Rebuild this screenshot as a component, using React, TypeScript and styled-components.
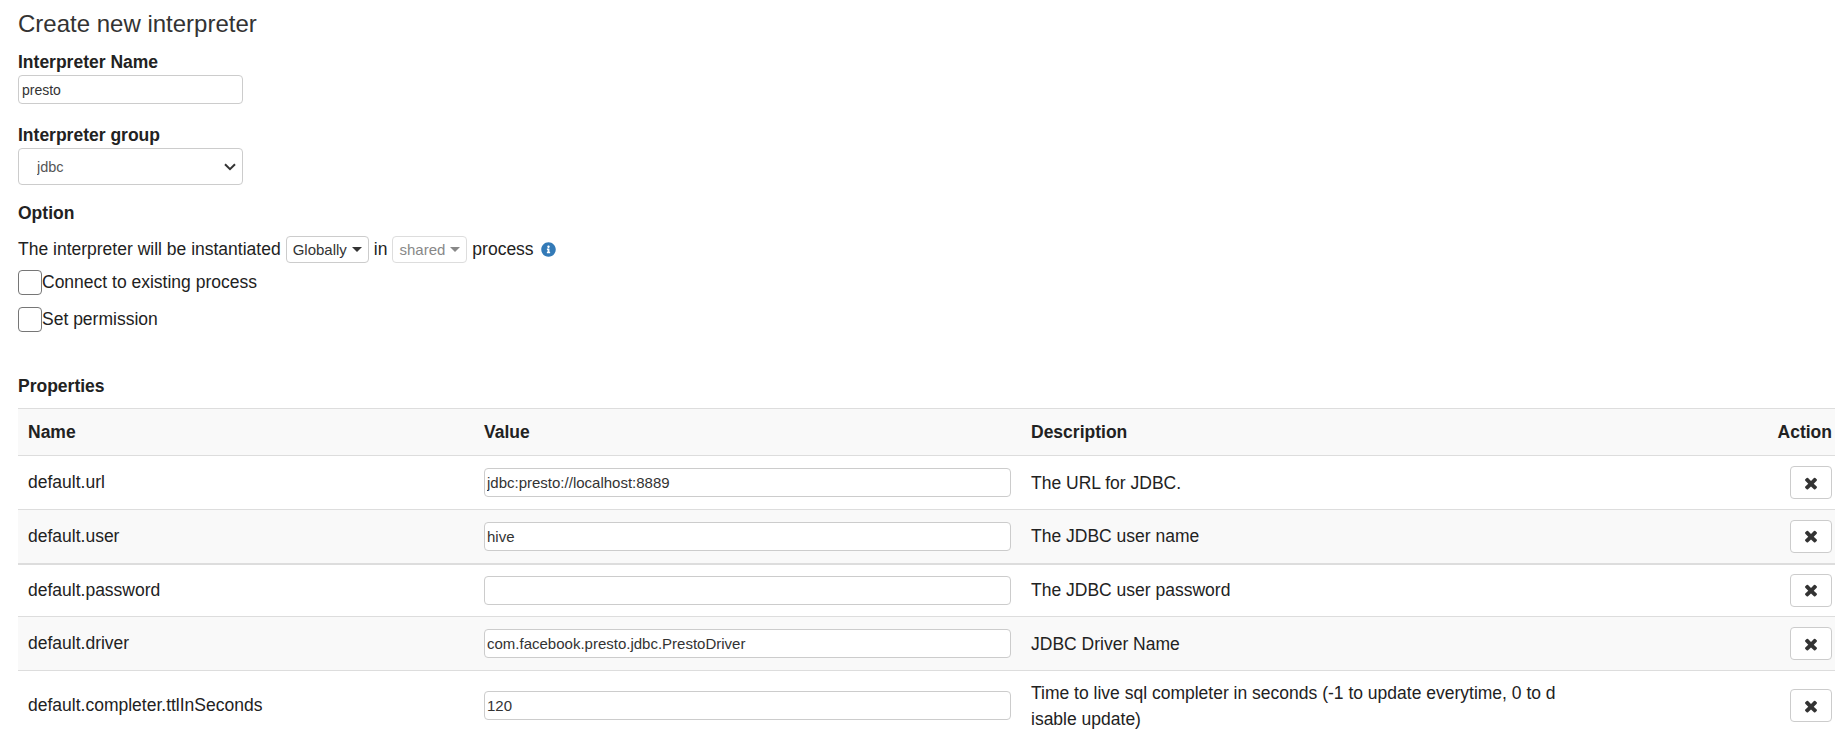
import styled, { createGlobalStyle } from "styled-components";
import { FaInfoCircle } from "react-icons/fa";

const GlobalStyle = createGlobalStyle`
  html, body {
    margin: 0;
    height: 740px;
    overflow: hidden;
    background: #fff;
    color: #222;
    font-family: "Liberation Sans", Arial, sans-serif;
    font-size: 17.5px;
  }
`;

const properties = [
  { name: "default.url", value: "jdbc:presto://localhost:8889", description: "The URL for JDBC.", height: 54 },
  { name: "default.user", value: "hive", description: "The JDBC user name", height: 54 },
  { name: "default.password", value: "", description: "The JDBC user password", height: 53 },
  { name: "default.driver", value: "com.facebook.presto.jdbc.PrestoDriver", description: "JDBC Driver Name", height: 54 },
  {
    name: "default.completer.ttlInSeconds",
    value: "120",
    description:
      "Time to live sql completer in seconds (-1 to update everytime, 0 to disable update)",
    height: 70,
  },
];

const TimesIcon = () => (
  <svg width="18" height="18" viewBox="0 0 1792 1792" fill="currentColor">
    <path d="M1490 1322q0 40-28 68l-136 136q-28 28-68 28t-68-28l-294-294-294 294q-28 28-68 28t-68-28l-136-136q-28-28-28-68t28-68l294-294-294-294q-28-28-28-68t28-68l136-136q28-28 68-28t68 28l294 294 294-294q28-28 68-28t68 28l136 136q28 28 28 68t-28 68l-294 294 294 294q28 28 28 68z" />
  </svg>
);

const App = () => {
  return (
    <>
      <GlobalStyle />
      <Page>
        <Title>Create new interpreter</Title>
        <FieldLabel>Interpreter Name</FieldLabel>
        <NameInput defaultValue="presto" />
        <FieldLabel $top={19}>Interpreter group</FieldLabel>
        <SelectWrap>
          <GroupSelect defaultValue="jdbc">
            <option value="jdbc">jdbc</option>
          </GroupSelect>
          <Chevron width="12" height="8" viewBox="0 0 12 8">
            <path d="M1 1.2 L6 6.2 L11 1.2" fill="none" stroke="#333" strokeWidth="2" />
          </Chevron>
        </SelectWrap>
        <FieldLabel $top={16}>Option</FieldLabel>
        <OptionLine>
          The interpreter will be instantiated
          <DropButton>
            Globally <Caret />
          </DropButton>
          in
          <DropButton $disabled>
            shared <Caret />
          </DropButton>
          process
          <InfoIcon />
        </OptionLine>
        <CheckRow $top={7}>
          <CheckBox type="checkbox" />
          Connect to existing process
        </CheckRow>
        <CheckRow $top={12}>
          <CheckBox type="checkbox" />
          Set permission
        </CheckRow>
        <FieldLabel $top={42}>Properties</FieldLabel>
        <PropsTable>
          <colgroup>
            <col width={456} />
            <col width={547} />
            <col />
            <col width={70} />
          </colgroup>
          <thead>
            <tr>
              <HeadCell>Name</HeadCell>
              <HeadCell>Value</HeadCell>
              <HeadCell>Description</HeadCell>
              <ActionHead>Action</ActionHead>
            </tr>
          </thead>
          <tbody>
            {properties.map((prop, i) => (
              <Row key={prop.name} $striped={i % 2 === 1} $thick={i === 1} $height={prop.height}>
                <Cell>{prop.name}</Cell>
                <Cell>
                  <ValueInput defaultValue={prop.value} />
                </Cell>
                <Cell>
                  <Description>{prop.description}</Description>
                </Cell>
                <ActionCell>
                  <RemoveButton>
                    <TimesIcon />
                  </RemoveButton>
                </ActionCell>
              </Row>
            ))}
          </tbody>
        </PropsTable>
      </Page>
    </>
  );
};

const Page = styled.div`
  display: flex;
  flex-direction: column;
  align-items: flex-start;
  padding: 10px 0 0 18px;
`;

const Title = styled.h4`
  margin: 0 0 12px;
  font-size: 24px;
  font-weight: 400;
  line-height: 28px;
  color: #333;
`;

const FieldLabel = styled.label<{ $top?: number }>`
  display: block;
  margin-top: ${(props) => props.$top ?? 0}px;
  height: 25px;
  font-size: 17.5px;
  font-weight: 700;
  line-height: 24px;
  color: #222;
`;

const NameInput = styled.input`
  box-sizing: border-box;
  width: 225px;
  height: 29px;
  padding: 0 3px;
  border: 1px solid #ccc;
  border-radius: 4px;
  font-family: inherit;
  font-size: 14px;
  color: #333;
  outline: none;
`;

const SelectWrap = styled.div`
  position: relative;
  width: 225px;
  height: 37px;
`;

const GroupSelect = styled.select`
  appearance: none;
  box-sizing: border-box;
  width: 100%;
  height: 100%;
  padding: 0 18px;
  border: 1px solid #ccc;
  border-radius: 4px;
  background: #fff;
  font-family: inherit;
  font-size: 14.5px;
  color: #555;
`;

const Chevron = styled.svg`
  position: absolute;
  top: 15px;
  right: 7px;
  pointer-events: none;
`;

const OptionLine = styled.div`
  display: flex;
  align-items: center;
  margin-top: 10px;
  height: 27px;
  font-size: 17.5px;
  color: #222;
`;

const DropButton = styled.span<{ $disabled?: boolean }>`
  display: inline-flex;
  align-items: center;
  box-sizing: border-box;
  height: 27px;
  margin: 0 5px;
  padding: 0 6px;
  border: 1px solid ${(props) => (props.$disabled ? "#ddd" : "#ccc")};
  border-radius: 4px;
  font-size: 15px;
  color: ${(props) => (props.$disabled ? "#888" : "#333")};
`;

const Caret = styled.span`
  width: 0;
  height: 0;
  margin-left: 5px;
  border-top: 5px solid currentColor;
  border-left: 5px solid transparent;
  border-right: 5px solid transparent;
`;

const InfoIcon = styled(FaInfoCircle)`
  margin-left: 7px;
  width: 15px;
  height: 15px;
  color: #337ab7;
`;

const CheckRow = styled.label<{ $top: number }>`
  display: flex;
  align-items: center;
  margin-top: ${(props) => props.$top}px;
  height: 25px;
  font-size: 17.5px;
  color: #222;
`;

const CheckBox = styled.input`
  appearance: none;
  box-sizing: border-box;
  width: 24px;
  height: 25px;
  margin: 0;
  border: 1px solid #767676;
  border-radius: 4px;
  background: #fff;
`;

const PropsTable = styled.table`
  width: 1817px;
  margin-top: 9px;
  border-collapse: collapse;
  table-layout: fixed;
  font-size: 17.5px;
`;

const HeadCell = styled.th`
  height: 46px;
  padding: 0 10px;
  border-top: 1px solid #ddd;
  border-bottom: 1px solid #ddd;
  background: #f9f9f9;
  font-weight: 700;
  text-align: left;
  color: #222;
`;

const ActionHead = styled(HeadCell)`
  padding: 0 3px 0 0;
  text-align: right;
`;

const Row = styled.tr<{ $striped: boolean; $thick: boolean; $height: number }>`
  height: ${(props) => props.$height}px;
  background: ${(props) => (props.$striped ? "#f9f9f9" : "#fff")};
  border-bottom: ${(props) => (props.$thick ? 2 : 1)}px solid #ddd;
`;

const Cell = styled.td`
  padding: 8px 10px;
  box-sizing: border-box;
  color: #222;
  vertical-align: middle;
`;

const ActionCell = styled(Cell)`
  padding: 0 3px 0 0;
  text-align: right;
`;

const ValueInput = styled.input`
  display: block;
  box-sizing: border-box;
  width: 527px;
  height: 29px;
  padding: 0 2px;
  border: 1px solid #ccc;
  border-radius: 4px;
  background: #fff;
  font-family: inherit;
  font-size: 15px;
  color: #333;
  outline: none;
`;

const Description = styled.div`
  width: 526px;
  line-height: 26px;
  word-break: break-all;
`;

const RemoveButton = styled.button`
  display: inline-flex;
  align-items: center;
  justify-content: center;
  box-sizing: border-box;
  width: 42px;
  height: 33px;
  padding: 0;
  border: 1px solid #ccc;
  border-radius: 4px;
  background: #fff;
  color: #333;
`;

export default App;
